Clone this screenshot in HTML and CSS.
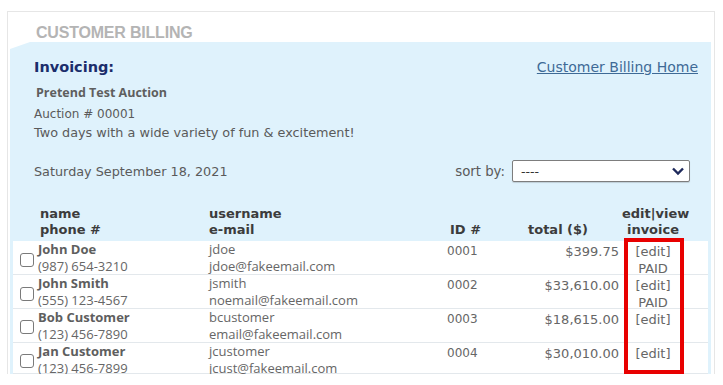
FILE: index.html
```html
<!DOCTYPE html>
<html lang="en">
<head>
  <title>Customer Billing</title>
  <link rel="stylesheet" href="styles.css">
</head>
<body>

  <div class="billing">
    <h1 class="billing-title">CUSTOMER BILLING</h1>

    <div class="panel">
      <!-- Heading row -->
      <div class="panel-top">
        <h2>Invoicing:</h2>
        <a href="#" class="home-link">Customer Billing Home</a>
      </div>

      <!-- Auction details -->
      <div class="auction">
        <h3>Pretend Test Auction</h3>
        <p>Auction # 00001</p>
        <p class="blurb">Two days with a wide variety of fun &amp; excitement!</p>
      </div>

      <div class="date-row">
        <span>Saturday September 18, 2021</span>
        <label class="sort">sort by:
          <span class="select">----
            <svg width="14" height="10" viewBox="0 0 14 10"><path d="M2 2.5 L7 7.5 L12 2.5" fill="none" stroke="#1f2a5c" stroke-width="2.4"/></svg>
          </span>
        </label>
      </div>

      <!-- Invoice list -->
      <div class="list">
        <div class="list-head">
          <span></span>
          <span class="h-name">name<br>phone #</span>
          <span>username<br>e-mail</span>
          <span class="h-id">ID #</span>
          <span class="h-total">total ($)</span>
          <span class="h-edit">edit|view<br>invoice</span>
        </div>

        <div class="rows">
          <div class="row">
            <span class="check"><span class="box"></span></span>
            <span class="name"><b>John Doe</b><br>(987) 654-3210</span>
            <span class="user">jdoe<br>jdoe@fakeemail.com</span>
            <span class="num id">0001</span>
            <span class="num total">$399.75</span>
            <span class="num edit">[edit]<br>PAID</span>
          </div>
          <div class="row">
            <span class="check"><span class="box"></span></span>
            <span class="name"><b>John Smith</b><br>(555) 123-4567</span>
            <span class="user">jsmith<br>noemail@fakeemail.com</span>
            <span class="num id">0002</span>
            <span class="num total">$33,610.00</span>
            <span class="num edit">[edit]<br>PAID</span>
          </div>
          <div class="row">
            <span class="check"><span class="box"></span></span>
            <span class="name"><b>Bob Customer</b><br>(123) 456-7890</span>
            <span class="user">bcustomer<br>email@fakeemail.com</span>
            <span class="num id">0003</span>
            <span class="num total">$18,615.00</span>
            <span class="num edit">[edit]</span>
          </div>
          <div class="row last">
            <span class="check"><span class="box"></span></span>
            <span class="name"><b>Jan Customer</b><br>(123) 456-7899</span>
            <span class="user">jcustomer<br>jcust@fakeemail.com</span>
            <span class="num id">0004</span>
            <span class="num total">$30,010.00</span>
            <span class="num edit">[edit]</span>
          </div>

          <div class="highlight"></div>
        </div>
      </div>
    </div>
  </div>

</body>
</html>
```

FILE: styles.css
```css
* {
  box-sizing: border-box;
  margin: 0;
  padding: 0;
}

body {
  font-family: "DejaVu Sans", Verdana, sans-serif;
  background: white;
  color: #5a5a5a;
}

.billing {
  margin: 11px 0 0 7px;
  width: 708px;
  border: 1px solid #e6e6e6;
  border-bottom: none;
  background: white;
}

.billing-title {
  font-family: "Liberation Sans", Arial, sans-serif;
  font-size: 16px;
  font-weight: bold;
  color: #b4b4b4;
  padding: 12px 0 0 28px;
  height: 30px;
  letter-spacing: -0.2px;
}

.panel {
  margin: 0 3px 0 2px;
  padding-top: 17px;
  background: #dff2fc;
  clip-path: polygon(0 7px, 20px 0, 100% 0, 100% 100%, 0 100%);
}

.panel-top {
  display: flex;
  justify-content: space-between;
  align-items: center;
  padding: 0 13px 0 24px;
}

.panel-top h2 {
  font-size: 14.5px;
  font-weight: bold;
  color: #1b2d6b;
}

.home-link {
  font-size: 14px;
  color: #3e6a96;
}

.auction {
  padding: 8px 0 0 24px;
  font-size: 12px;
  line-height: 19px;
}

.auction h3 {
  font-family: "Open Sans", sans-serif;
  font-size: 12.5px;
  font-weight: bold;
  color: #5e5e5e;
  padding-left: 2px;
  margin-bottom: 3px;
}

.auction .blurb {
  font-size: 12.8px;
  line-height: 18px;
}

.date-row {
  display: flex;
  justify-content: space-between;
  align-items: center;
  padding: 18px 21px 0 24px;
  font-size: 12.8px;
}

.sort {
  display: flex;
  align-items: center;
  gap: 7px;
  font-size: 13.3px;
}

.select {
  width: 178px;
  height: 22px;
  background: white;
  border: 1px solid #7d7d7d;
  border-radius: 2px;
  display: flex;
  justify-content: space-between;
  align-items: center;
  padding: 0 4px 0 8px;
  color: #333;
  font-size: 12.5px;
  box-shadow: 0 1px 1px rgba(0, 0, 0, 0.15);
}

.list {
  padding: 24px 3px 0 3px;
}

.list-head,
.row {
  display: grid;
  grid-template-columns: 25px 171px 221px 70px 122px 62px 1fr;
}

.list-head {
  font-size: 13px;
  font-weight: bold;
  color: #3c3c3c;
  line-height: 16px;
  align-items: end;
  padding-bottom: 3px;
}

.h-name { padding-left: 2px; }
.h-id { padding-left: 20px; }
.h-total { padding-left: 28px; }
.h-edit { text-align: center; }

.rows {
  position: relative;
}

.row {
  height: 34px;
  background: white;
  border-bottom: 1px solid #e3e8ec;
  font-family: "Open Sans", sans-serif;
  font-size: 13px;
  color: #666;
  white-space: nowrap;
}

.row.last {
  height: 31px;
}

.row b {
  color: #5e5e5e;
}

.check {
  align-self: center;
  padding: 2px 0 0 7px;
}

.box {
  display: block;
  width: 14px;
  height: 14px;
  border: 1px solid #7a7a7a;
  border-radius: 3px;
  background: white;
}

.name,
.user {
  line-height: 17px;
}

.num {
  font-family: "DejaVu Sans", Verdana, sans-serif;
  font-size: 13px;
  line-height: 17px;
  padding-top: 1.5px;
}

.row .id {
  font-size: 12px;
  padding-left: 17px;
}

.total {
  text-align: right;
  padding-right: 3px;
}

.edit {
  text-align: center;
}

.highlight {
  position: absolute;
  left: 611px;
  top: -3px;
  width: 60px;
  height: 136px;
  border: 4px solid #e80000;
}
```
